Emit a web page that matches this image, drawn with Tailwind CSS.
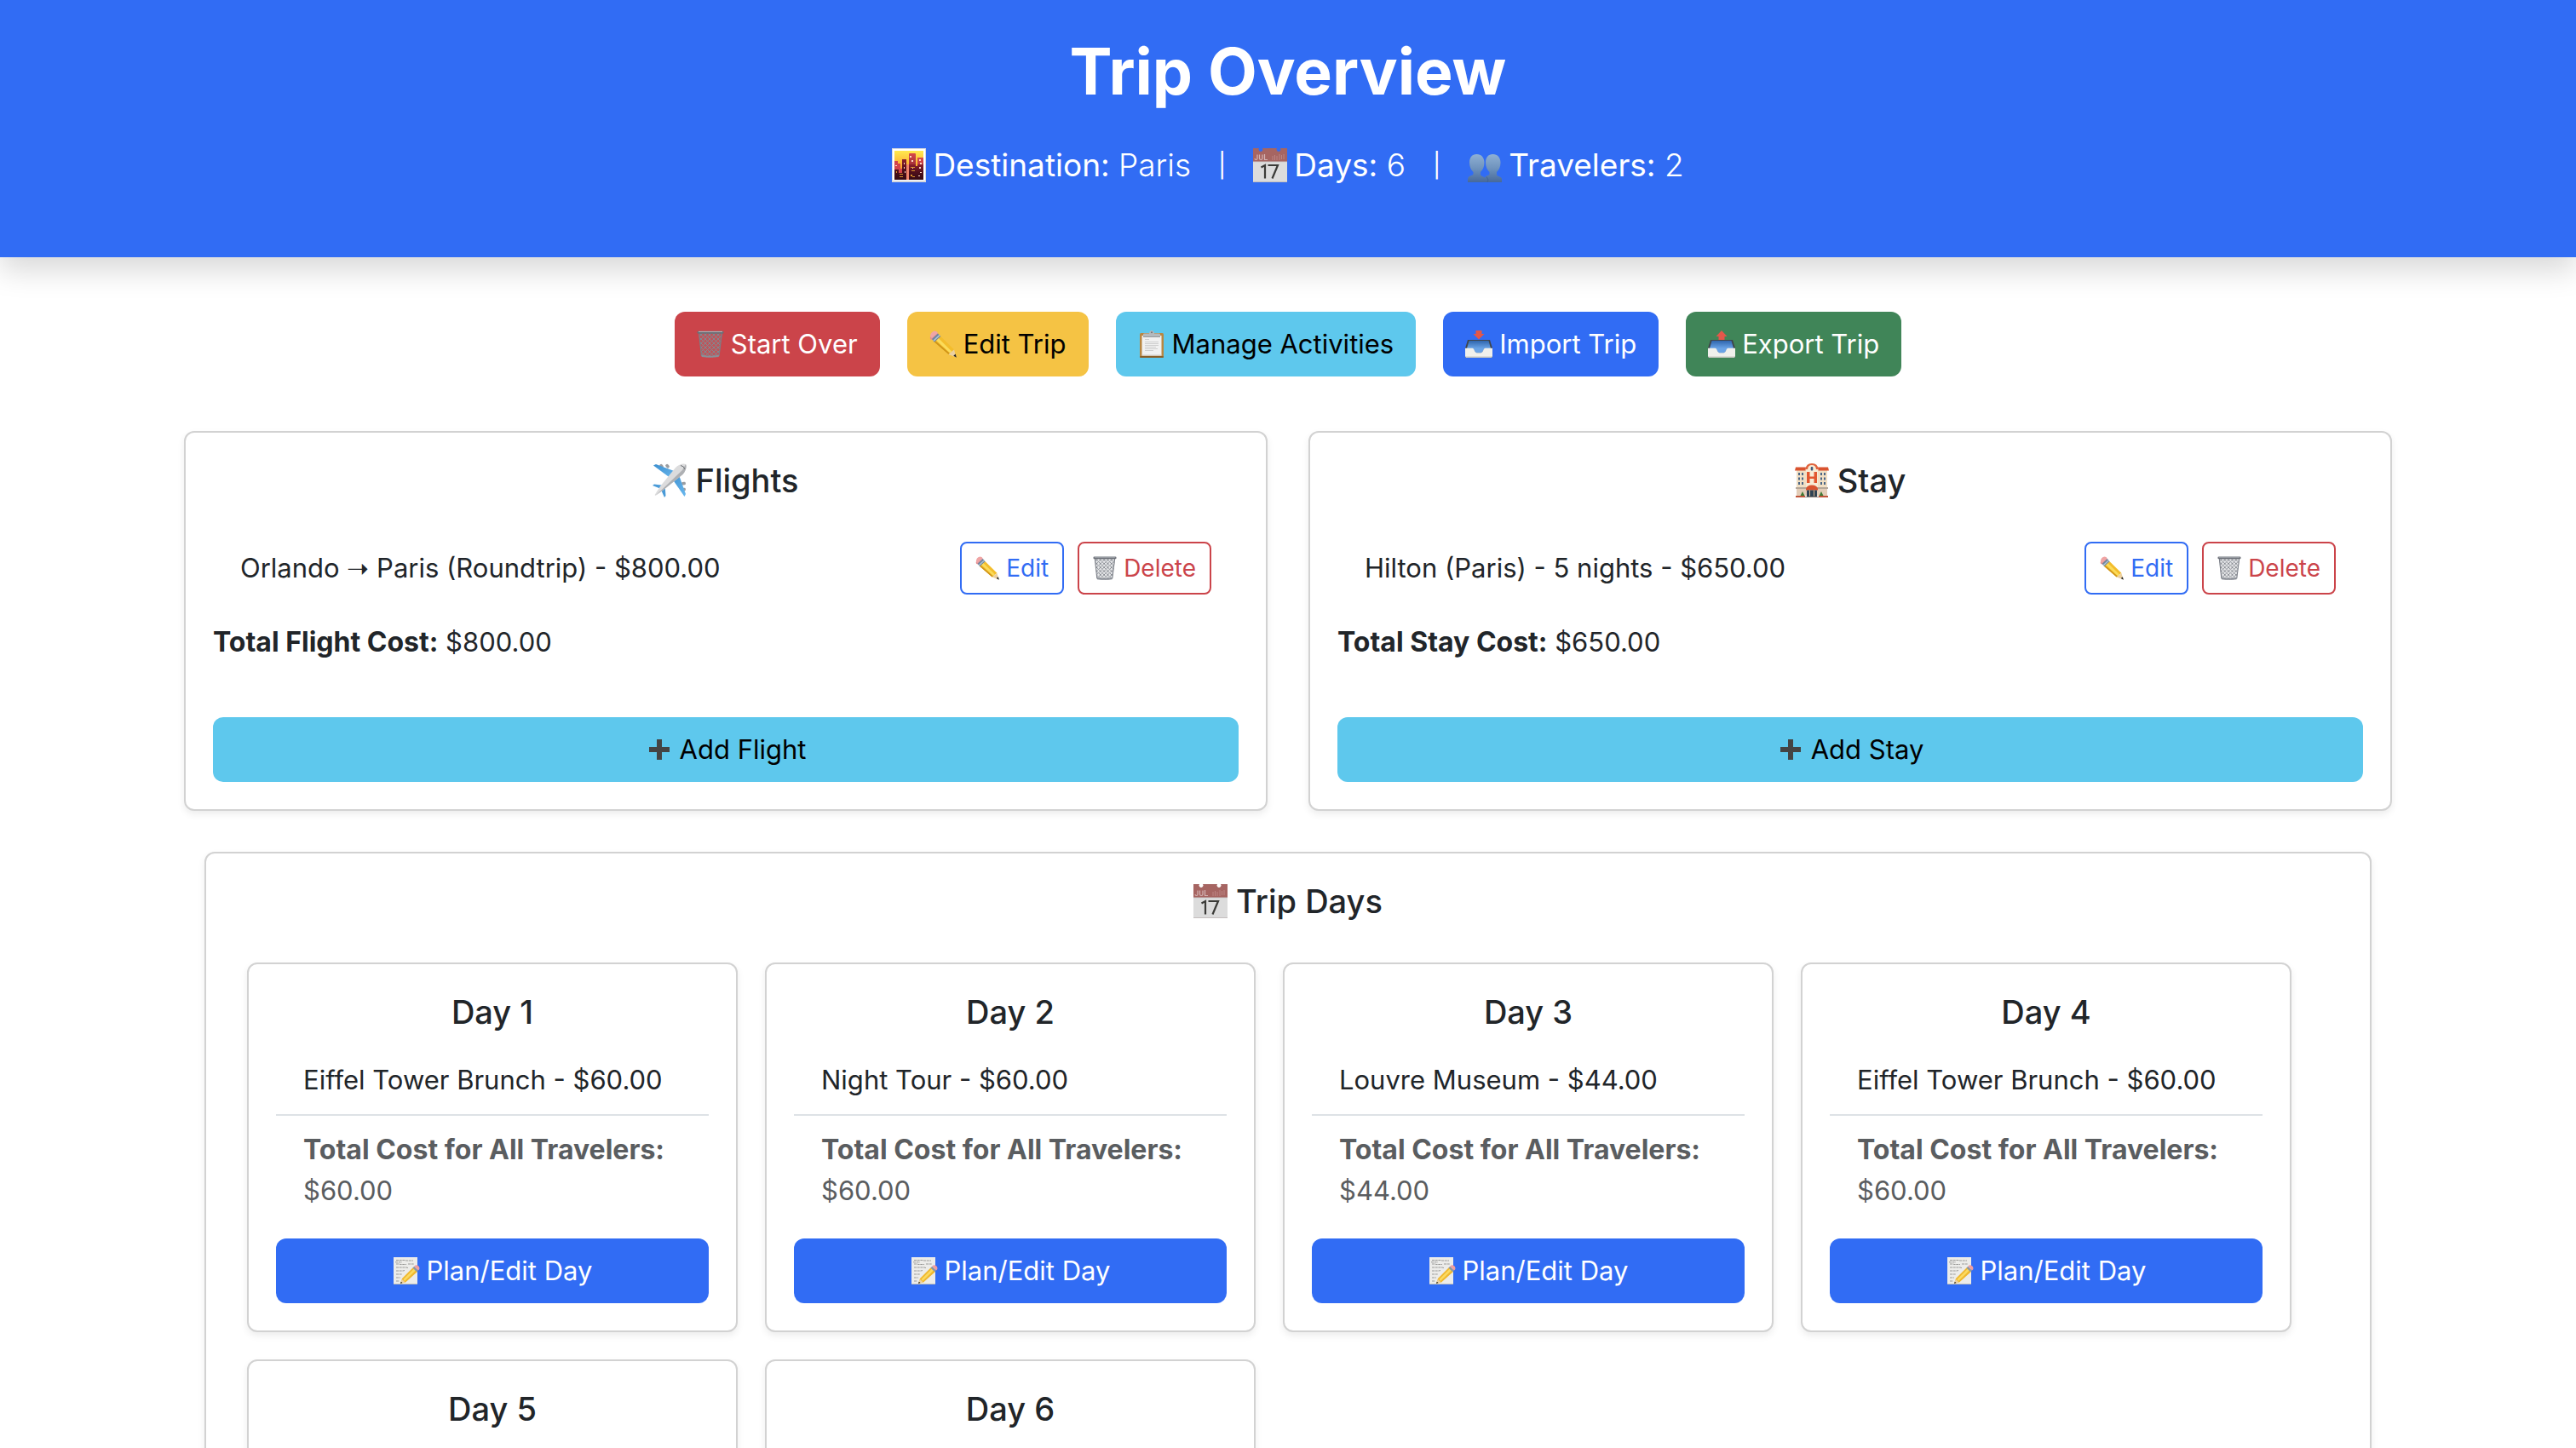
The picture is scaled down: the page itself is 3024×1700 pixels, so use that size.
<!DOCTYPE html>
<html lang="en">
<head>
<meta charset="utf-8">
<meta name="viewport" content="width=device-width, initial-scale=1">
<title>Trip Overview</title>
<script src="https://cdn.jsdelivr.net/npm/@tailwindcss/browser@4"></script>
</head>
<body class="bg-white font-['Inter',sans-serif] text-[31px] leading-[48px] text-[#212529]">

<!-- Shared icon artwork -->
<svg class="absolute size-0" aria-hidden="true">
  <defs>
    <linearGradient id="sky" x1="0" y1="0" x2="0" y2="1"><stop offset="0" stop-color="#ffe94f"/><stop offset=".5" stop-color="#fdb032"/><stop offset="1" stop-color="#e8672c"/></linearGradient>
    <linearGradient id="tower" x1="0" y1="0" x2="0" y2="1"><stop offset="0" stop-color="#d9484a"/><stop offset=".6" stop-color="#a5323a"/><stop offset="1" stop-color="#5c1620"/></linearGradient>
    <linearGradient id="dark" x1="0" y1="0" x2="0" y2="1"><stop offset="0" stop-color="#8d1f2c"/><stop offset=".5" stop-color="#4f0f1b"/><stop offset="1" stop-color="#350a13"/></linearGradient>
    <linearGradient id="bust" x1="0" y1="0" x2="0" y2="1"><stop offset="0" stop-color="#8fb0d4"/><stop offset=".5" stop-color="#6f93bd"/><stop offset="1" stop-color="#47699a"/></linearGradient>
    <linearGradient id="tray" x1="0" y1="0" x2="0" y2="1"><stop offset="0" stop-color="#2f66ae"/><stop offset="1" stop-color="#6aa3e6"/></linearGradient>
    <linearGradient id="wing" x1="0" y1="0" x2="1" y2="1"><stop offset="0" stop-color="#3c8fd0"/><stop offset="1" stop-color="#6bb9ee"/></linearGradient>
    <pattern id="mesh" width="5" height="5" patternUnits="userSpaceOnUse"><path d="M0 0L5 5M5 0L0 5" stroke="#84888f" stroke-width="1"/></pattern>
  </defs>
  <symbol id="i-city" viewBox="0 0 40 40">
    <rect width="40" height="40" fill="#d9dadd"/><rect x="1" y="1" width="38" height="37" fill="#fff"/>
    <rect x="3" y="3" width="34" height="34" fill="url(#sky)"/>
    <path d="M3 15h4v3h3v6h3v13H3z" fill="#d3434a"/><path d="M20 7q0-1 1-1h6q1 0 1 1v20h-8z" fill="url(#tower)"/><path d="M30 11h7v26h-7z" fill="url(#tower)"/>
    <path d="M3 25h5v4h4V13h5v24H3z" fill="url(#dark)"/><path d="M20 19h8v2h2v-2h7v18H20z" fill="url(#dark)"/><path d="M17 19h3v18h-3z" fill="#f0836a"/>
    <path d="M21 9h2v2h-2zM23 14h2v2h-2zM32 13h2v2h-2zM33 17h2v2h-2zM4 20h2v1H4zM14 17h1v2h-1zM14 22h1v2h-1zM15 27h1v2h-1zM32 22h2v2h-2zM33 28h2v1h-2zM31 32h2v1h-2zM24 23h1v1h-1z" fill="#ffd9c4"/>
    <path d="M9 30h4v1H9zM9 33h4v1H9zM22 22h5v1h-5zM23 26h4v1h-4zM22 31h2v2h-2zM24 33h3v1h-3zM5 27h1v2H5z" fill="#d9932f"/>
  </symbol>
  <symbol id="i-cal" viewBox="0 0 40 40">
    <path d="M0 0h7a2.500 2.500 0 1 0 4 0h17a2.500 2.500 0 1 0 4 0h8v16H0z" fill="#a66562"/>
    <path d="M0 16h40v23H0z" fill="#dcdcdc"/><path d="M0 39h40v1H0zM0 15.500h40v.8H0z" fill="#c4bfbf"/>
    <g fill="none" stroke="#d3b4b3" stroke-width="1.200"><path d="M5 7.500v4.500q0 1.500-1.500 1.500T2 12M7.500 7.500V12q0 1.500 1.700 1.500T11 12V7.500M13.500 7v6.500h3.500"/></g>
    <path d="M23 9v5M25.500 8v6M28 9v5M31 7v7M33.500 8v5M36 7v6" stroke="#bb8583" stroke-width="1"/>
    <path d="M9.500 22.500L14 20v15.500M17.500 20H29l-6.500 15.500" fill="none" stroke="#3b3b38" stroke-width="2.200"/>
  </symbol>
  <symbol id="i-people" viewBox="0 0 40 40">
    <g fill="url(#bust)"><path d="M10.500 7c5.500 0 9 4 9 10 0 5-2 8.500-4.500 11v3c0 2 5.500 2.500 6 5l.5 4H0c0-4 0-6.500 3-7.500 2-.7 3.500-1 3.500-2.500v-2C4 25.500 2 22 2 17 2 11 5 7 10.500 7z"/><path d="M29.500 7c5.500 0 9 4 9 10 0 5-2 8.500-4.500 11v3c0 2 5.500 2 6 5v4H19c0-4 1-6.500 3-7.500 2-.7 3.500-1 3.500-2.500v-2c-2.500-2.500-4.500-6-4.500-11 0-6 3-10 8.500-10z"/></g>
    <path d="M22 33.500l2 3.500-1 3" fill="none" stroke="#3c5f92" stroke-width=".8"/>
  </symbol>
  <symbol id="i-trash" viewBox="0 0 32 32">
    <path d="M2 2l3.500 28q10 3 20.500 0L30 2z" fill="#8d9199" fill-opacity=".22"/><path d="M2 2l3.500 28q10 3 20.500 0L30 2z" fill="url(#mesh)"/>
    <path d="M2.500 2l3 28M29.500 2L26 30" stroke="#7b7f87" stroke-width="1.200"/>
    <rect x=".5" y=".7" width="31" height="3" rx="1.500" fill="#6b6f77"/><path d="M2 1.400h28" stroke="#c6c9ce" stroke-width=".8"/>
    <path d="M5.500 28.500q10 2.500 20.500 0l-.3 2.500q-10 1.500-20 0z" fill="#8b8f97"/>
  </symbol>
  <symbol id="i-pencil" viewBox="0 0 32 32">
    <path d="M1 7.500L8 1.500l3 3.500-7 6q-4 0-3-3.500z" fill="#e58f92"/><path d="M1 7q0-5 5-6.500 3 0 4 2.500L3 9z" fill="#f0a5a5"/>
    <path d="M3 10l7-6.500 3.500 3.800-7.500 6.700z" fill="#6e87a0"/><path d="M4.500 11.500l7-6.500 1 1-7 6.500z" fill="#b9c8d6"/>
    <path d="M6 13.800L13.300 7 29 22.500l-6.500 5.500z" fill="#f3bd2c"/><path d="M8.300 11.700l2.600-2.400 15.500 15.400-2.200 1.800z" fill="#fbdb5a"/><path d="M6 13.800l1.500-1.300 16.300 14.300-1.300 1.200z" fill="#cf9419"/>
    <path d="M22.500 28L29 22.500l2.500 9z" fill="#ecd0a0"/><path d="M28.300 29.800l2.400-2.200 1.100 4.200z" fill="#222"/>
  </symbol>
  <symbol id="i-clip" viewBox="0 0 32 32">
    <rect x="2" y="3" width="28" height="29" rx="1.500" fill="#b98742"/><rect x="2" y="30" width="28" height="2" rx="1" fill="#8a5f28"/>
    <rect x="4.500" y="6" width="23" height="23.500" fill="#f1f1f1"/><path d="M4.500 28.500h23v1h-23z" fill="#cfcfcf"/>
    <path d="M8 10.500h5M8 13.500h16M8 15.500h16M8 17.500h16M8 19.500h13M8 21.500h15M8 23.500h10" stroke="#cfcfcf" stroke-width="1"/>
    <path d="M6 7V4.500q0-1 1.500-1H13Q13.500 0 16 0t3 3.500h5.500q1.500 0 1.500 1V7z" fill="#b4b9bd"/><path d="M6 7h20v.8H6z" fill="#7f8488"/><circle cx="16" cy="2.200" r="1" fill="#6f7478"/>
  </symbol>
  <symbol id="i-tray" viewBox="0 0 32 32">
    <path d="M3 11h26l3 10v9.500q0 1.500-1.500 1.500h-29Q0 32 0 30.500V21z" fill="#3f444a"/><path d="M4.500 12h23l2.500 9H2z" fill="url(#tray)"/>
    <path d="M9 21h14l-3.500 5.500h-7z" fill="#6aa3e6"/>
    <path d="M0 20.800h8.500q1 0 1.500 1l1.500 3q.7 1.400 2 1.400h5q1.300 0 2-1.400l1.500-3q.5-1 1.500-1H32V30q0 2-2 2H2q-2 0-2-2z" fill="#f0f0ec"/><path d="M.5 30.500q.5 1.500 2 1.500h27q1.500 0 2-1.500z" fill="#c9c9c2"/>
  </symbol>
  <symbol id="i-import" viewBox="0 0 32 32"><use href="#i-tray"/><path d="M12.500 0h7v4h3L16 10.500 9.500 4h3z" fill="#e4574a"/></symbol>
  <symbol id="i-export" viewBox="0 0 32 32"><use href="#i-tray"/><path d="M12.500 11V7h-3L16 0l6.500 7h-3v4z" fill="#e4574a"/></symbol>
  <symbol id="i-plane" viewBox="0 0 40 40">
    <g fill="#9a9da1"><rect x="8" y="1" width="5" height="3.500" rx="1.500" transform="rotate(50 10 3)"/><rect x="15" y="1" width="5" height="3.500" rx="1.500" transform="rotate(50 17 3)"/><rect x="34" y="22" width="5" height="3.500" rx="1.500" transform="rotate(-10 36 24)"/><rect x="34" y="29" width="5" height="3.500" rx="1.500" transform="rotate(-10 36 31)"/></g>
    <path d="M1 2.500L4 1l24 9-6 8z" fill="url(#wing)"/><path d="M37.500 39l1.500-3L30 11l-7 7z" fill="url(#wing)"/>
    <path d="M0 26l2-1.500L14 26l-4 4zM14 40l1.500-2L14.500 25l-5 5z" fill="#4a9bd8"/>
    <path d="M39 1c1.500 3 0 8-3.500 12L13 31 4 37.500c-1 .5-1.500 0-1-1L9 27 27 5c4-4 9-5.500 12-4z" fill="#dcdcdd"/><path d="M39 1c1.500 3 0 8-3.500 12L13 31 4 37.500 35 8z" fill="#aeb0b3"/>
    <path d="M33 2.500q4 .5 5 4.500" fill="none" stroke="#6d7175" stroke-width="1"/>
  </symbol>
  <symbol id="i-hotel" viewBox="0 0 40 40">
    <path d="M2 8h36v29H2z" fill="#f1dfc4"/><path d="M13 38V7q0-7 7-7t7 7v31z" fill="#f8ebd5"/><path d="M12.500 7Q13 0 20 0t7.500 7H25q-.5-5-5-5t-5 5z" fill="#e0633e"/>
    <path d="M1 4.500h12l-.5 4H0zM39 4.500H27l.5 4H40z" fill="#d9532f"/>
    <path d="M14 10h3.500v5.500h5V10H26v13h-3.500v-5h-5v5H14z" fill="#e2572f"/><rect x="18.700" y="4" width="2.600" height="4.500" rx="1" fill="#3e5a7c"/>
    <path d="M4 11h2v3H4zM8 11h2v3H8zM30 11h2v3h-2zM34 11h2v3h-2zM4 16.500h2v3H4zM8 16.500h2v3H8zM30 16.500h2v3h-2zM34 16.500h2v3h-2zM4 22h2v3H4zM8 22h2v3H8zM30 22h2v3h-2zM34 22h2v3h-2z" fill="#4a6585"/>
    <path d="M1 28h38v2H1z" fill="#b4a79a"/><path d="M2 30h36v8H2z" fill="#e3cdb8"/>
    <path d="M13 30q1-4.500 7-4.500T27 30v1.500H13z" fill="#d9532f"/><path d="M14 31.500h12V39H14z" fill="#2f4355"/><path d="M17.500 31.500v7M22.500 31.500v7" stroke="#d8b48c" stroke-width="1"/>
    <path d="M6.500 38l2.500-5 2.500 5zM28.500 38l2.500-5 2.500 5z" fill="#3f7a35"/><path d="M1 38h11v2H1zM28 38h11v2H28z" fill="#c0553a"/><path d="M12 39h16v1H12z" fill="#8d8078"/>
  </symbol>
  <symbol id="i-plus" viewBox="0 0 32 32"><path d="M13 4h6v9h9v6h-9v9h-6v-9H4v-6h9z" fill="#444"/></symbol>
  <symbol id="i-memo" viewBox="0 0 32 32">
    <rect x="1" y="0" width="28" height="32" fill="#ececea"/><path d="M1 31h28v1H1z" fill="#c0c0bd"/>
    <path d="M4 3.500h10l2 .5h8M4 8h4l1 .5h7M18 8h7M4 12h12l2 .5M4 16h8l2-.5M4 20h7M4 24h5M4 28h4M3 5.800h8" stroke="#9b9b99" stroke-width="1" fill="none" stroke-dasharray="3 .7"/>
    <path d="M9 31l2-6L24 12l5 5-14 12.500z" fill="#efb72d"/><path d="M12.500 26L25 13.500l2 2L14 28z" fill="#fbda60"/><path d="M9 31l1.800-5.300 3.900 3.700z" fill="#ecd0a0"/><path d="M9 31l.8-2.300 1.600 1.300z" fill="#222"/>
    <path d="M23.500 12.500l1.800-1.700 4.700 4.700-1.800 1.800z" fill="#8796a6"/><path d="M25.300 10.800Q27 8.800 29 9.500q2.600 1 2.500 3.500 0 1.500-1.500 2.500z" fill="#ef9da0"/>
  </symbol>
</svg>

<header class="relative flex flex-col items-center gap-8 bg-[#316cf4] pt-9 pb-[78px] text-white shadow-[0_16px_32px_rgba(0,0,0,0.15)]">
  <h1 class="text-[75px] leading-[96px] font-bold">Trip Overview</h1>
  <p class="flex items-center gap-8 text-[37px] leading-[60px] font-light">
    <span class="flex items-center gap-2"><svg class="size-10"><use href="#i-city"/></svg><span><strong class="font-normal">Destination:</strong> Paris</span></span>
    <span class="text-[28px] font-normal">|</span>
    <span class="flex items-center gap-2"><svg class="size-10"><use href="#i-cal"/></svg><span><strong class="font-normal">Days:</strong> 6</span></span>
    <span class="text-[28px] font-normal">|</span>
    <span class="flex items-center gap-2"><svg class="size-10"><use href="#i-people"/></svg><span><strong class="font-normal">Travelers:</strong> 2</span></span>
  </p>
</header>

<main class="mx-auto max-w-[2640px] px-6 pt-16">
  <div class="flex justify-center gap-8">
    <button type="button" class="flex items-center gap-2 rounded-xl bg-[#cb444a] px-[26px] py-3.5 text-white"><svg class="size-8"><use href="#i-trash"/></svg>Start Over</button>
    <button type="button" class="flex items-center gap-2 rounded-xl bg-[#f5c344] px-[26px] py-3.5 text-black"><svg class="size-8"><use href="#i-pencil"/></svg>Edit Trip</button>
    <button type="button" class="flex items-center gap-2 rounded-xl bg-[#5ec8ed] px-[26px] py-3.5 text-black"><svg class="size-8"><use href="#i-clip"/></svg>Manage Activities</button>
    <button type="button" class="flex items-center gap-2 rounded-xl bg-[#316cf4] px-[26px] py-3.5 text-white"><svg class="size-8"><use href="#i-import"/></svg>Import Trip</button>
    <button type="button" class="flex items-center gap-2 rounded-xl bg-[#408558] px-[26px] py-3.5 text-white"><svg class="size-8"><use href="#i-export"/></svg>Export Trip</button>
  </div>

  <div class="mt-16 grid grid-cols-2 gap-12">
    <section class="rounded-xl border-2 border-[#d2d2d2] bg-white p-8 shadow-[0_4px_8px_rgba(0,0,0,0.075)]">
      <h2 class="flex items-center justify-center gap-2.5 text-[38px] leading-[48px] font-medium"><svg class="size-10"><use href="#i-plane"/></svg>Flights</h2>
      <div class="mt-8 flex items-center justify-between px-8 py-4">
        <span>Orlando ➝ Paris (Roundtrip) - $800.00</span>
        <div class="flex gap-4">
          <button type="button" class="flex items-center gap-2 rounded-lg border-2 border-[#316cf4] px-4 py-2 text-[28px] leading-[42px] text-[#316cf4]"><svg class="size-7"><use href="#i-pencil"/></svg>Edit</button>
          <button type="button" class="flex items-center gap-2 rounded-lg border-2 border-[#cb444a] px-4 py-2 text-[28px] leading-[42px] text-[#cb444a]"><svg class="size-7"><use href="#i-trash"/></svg>Delete</button>
        </div>
      </div>
      <p class="mt-4"><strong class="text-[32px] font-bold">Total Flight Cost:</strong> $800.00</p>
      <button type="button" class="mt-16 flex w-full items-center justify-center gap-2 rounded-xl bg-[#5ec8ed] py-3.5 text-black"><svg class="size-8"><use href="#i-plus"/></svg>Add Flight</button>
    </section>

    <section class="rounded-xl border-2 border-[#d2d2d2] bg-white p-8 shadow-[0_4px_8px_rgba(0,0,0,0.075)]">
      <h2 class="flex items-center justify-center gap-2.5 text-[38px] leading-[48px] font-medium"><svg class="size-10"><use href="#i-hotel"/></svg>Stay</h2>
      <div class="mt-8 flex items-center justify-between px-8 py-4">
        <span>Hilton (Paris) - 5 nights - $650.00</span>
        <div class="flex gap-4">
          <button type="button" class="flex items-center gap-2 rounded-lg border-2 border-[#316cf4] px-4 py-2 text-[28px] leading-[42px] text-[#316cf4]"><svg class="size-7"><use href="#i-pencil"/></svg>Edit</button>
          <button type="button" class="flex items-center gap-2 rounded-lg border-2 border-[#cb444a] px-4 py-2 text-[28px] leading-[42px] text-[#cb444a]"><svg class="size-7"><use href="#i-trash"/></svg>Delete</button>
        </div>
      </div>
      <p class="mt-4"><strong class="text-[32px] font-bold">Total Stay Cost:</strong> $650.00</p>
      <button type="button" class="mt-16 flex w-full items-center justify-center gap-2 rounded-xl bg-[#5ec8ed] py-3.5 text-black"><svg class="size-8"><use href="#i-plus"/></svg>Add Stay</button>
    </section>
  </div>

  <section class="mx-6 mt-12 rounded-xl border-2 border-[#d2d2d2] bg-white py-8 shadow-[0_4px_8px_rgba(0,0,0,0.075)]">
    <h2 class="flex items-center justify-center gap-2.5 text-[38px] leading-[48px] font-medium"><svg class="size-10"><use href="#i-cal"/></svg>Trip Days</h2>
    <div class="mt-12 grid grid-cols-4 gap-8 pr-[92px] pl-12">
      <article class="rounded-xl border-2 border-[#d2d2d2] bg-white p-8 shadow-[0_4px_8px_rgba(0,0,0,0.075)]">
        <h3 class="text-center text-[38px] leading-[48px] font-medium">Day 1</h3>
        <ul class="mt-4">
          <li class="border-b-2 border-[#dee2e6] px-8 py-4">Eiffel Tower Brunch - $60.00</li>
          <li class="px-8 py-4 text-[#5a5d60]"><strong class="block text-[32px] leading-[48px] font-bold whitespace-nowrap">Total Cost for All Travelers:</strong>$60.00</li>
        </ul>
        <button type="button" class="mt-4 flex w-full items-center justify-center gap-2 rounded-xl bg-[#316cf4] py-3.5 text-white"><svg class="size-8"><use href="#i-memo"/></svg>Plan/Edit Day</button>
      </article>
      <article class="rounded-xl border-2 border-[#d2d2d2] bg-white p-8 shadow-[0_4px_8px_rgba(0,0,0,0.075)]">
        <h3 class="text-center text-[38px] leading-[48px] font-medium">Day 2</h3>
        <ul class="mt-4">
          <li class="border-b-2 border-[#dee2e6] px-8 py-4">Night Tour - $60.00</li>
          <li class="px-8 py-4 text-[#5a5d60]"><strong class="block text-[32px] leading-[48px] font-bold whitespace-nowrap">Total Cost for All Travelers:</strong>$60.00</li>
        </ul>
        <button type="button" class="mt-4 flex w-full items-center justify-center gap-2 rounded-xl bg-[#316cf4] py-3.5 text-white"><svg class="size-8"><use href="#i-memo"/></svg>Plan/Edit Day</button>
      </article>
      <article class="rounded-xl border-2 border-[#d2d2d2] bg-white p-8 shadow-[0_4px_8px_rgba(0,0,0,0.075)]">
        <h3 class="text-center text-[38px] leading-[48px] font-medium">Day 3</h3>
        <ul class="mt-4">
          <li class="border-b-2 border-[#dee2e6] px-8 py-4">Louvre Museum - $44.00</li>
          <li class="px-8 py-4 text-[#5a5d60]"><strong class="block text-[32px] leading-[48px] font-bold whitespace-nowrap">Total Cost for All Travelers:</strong>$44.00</li>
        </ul>
        <button type="button" class="mt-4 flex w-full items-center justify-center gap-2 rounded-xl bg-[#316cf4] py-3.5 text-white"><svg class="size-8"><use href="#i-memo"/></svg>Plan/Edit Day</button>
      </article>
      <article class="rounded-xl border-2 border-[#d2d2d2] bg-white p-8 shadow-[0_4px_8px_rgba(0,0,0,0.075)]">
        <h3 class="text-center text-[38px] leading-[48px] font-medium">Day 4</h3>
        <ul class="mt-4">
          <li class="border-b-2 border-[#dee2e6] px-8 py-4">Eiffel Tower Brunch - $60.00</li>
          <li class="px-8 py-4 text-[#5a5d60]"><strong class="block text-[32px] leading-[48px] font-bold whitespace-nowrap">Total Cost for All Travelers:</strong>$60.00</li>
        </ul>
        <button type="button" class="mt-4 flex w-full items-center justify-center gap-2 rounded-xl bg-[#316cf4] py-3.5 text-white"><svg class="size-8"><use href="#i-memo"/></svg>Plan/Edit Day</button>
      </article>
      <article class="min-h-96 rounded-xl border-2 border-[#d2d2d2] bg-white p-8 shadow-[0_4px_8px_rgba(0,0,0,0.075)]">
        <h3 class="text-center text-[38px] leading-[48px] font-medium">Day 5</h3>
      </article>
      <article class="min-h-96 rounded-xl border-2 border-[#d2d2d2] bg-white p-8 shadow-[0_4px_8px_rgba(0,0,0,0.075)]">
        <h3 class="text-center text-[38px] leading-[48px] font-medium">Day 6</h3>
      </article>
    </div>
  </section>
</main>
</body>
</html>
